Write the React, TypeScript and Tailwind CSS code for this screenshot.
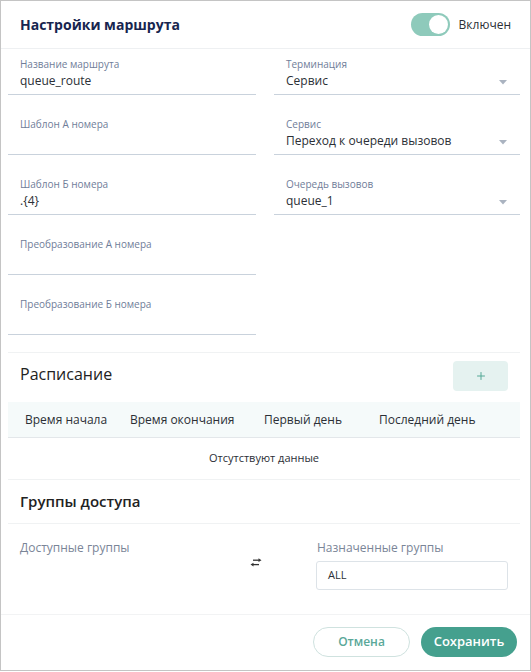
import { Plus } from "lucide-react";

const font = { fontFamily: '"Open Sans", "Noto Sans", sans-serif' };

interface FieldProps {
  label: string;
  value?: string;
  select?: boolean;
}

const Caret = () => (
  <svg width="8" height="5" viewBox="0 0 8 5" className="mr-[1px] mt-[2px]">
    <path d="M0 0 L8 0 L4 4.5 Z" fill="#aab3c0" />
  </svg>
);

const Field = ({ label, value, select }: FieldProps) => {
  return (
    <div className="h-[60px] flex flex-col justify-end border-b border-[#c9d2dc] pb-[3px]">
      <div className="px-3 text-[10px] leading-[14px] text-[#6f7d99]">{label}</div>
      <div className="px-3 h-[20px] flex items-center justify-between text-[12px] text-[#2b2f36]">
        <span>{value}</span>
        {select && <Caret />}
      </div>
    </div>
  );
};

const SwapIcon = () => (
  <svg width="12" height="9" viewBox="0 0 12 9">
    <path d="M3 2.2 H9" stroke="#333" strokeWidth="1.3" />
    <path d="M8.5 0.3 L11.5 2.2 L8.5 4.1 Z" fill="#333" />
    <path d="M9 6.6 H3" stroke="#333" strokeWidth="1.3" />
    <path d="M3.5 4.7 L0.5 6.6 L3.5 8.5 Z" fill="#333" />
  </svg>
);

export default function App() {
  return (
    <div style={font} className="w-[531px] h-[671px] border border-[#c4c4c4] bg-white flex flex-col">
      <div className="h-[48px] flex items-center justify-between pl-[19px] pr-[19px] border-b border-[#eef0f2]">
        <h1 className="text-[14px] font-bold text-[#17254f]">Настройки маршрута</h1>
        <div className="flex items-center gap-[9px]">
          <div className="w-[39px] h-[23px] rounded-full bg-[#8ecabb] flex items-center justify-end pr-[2px]">
            <div className="w-[19px] h-[19px] rounded-full bg-white" />
          </div>
          <span className="text-[12px] text-[#2b2f36]">Включен</span>
        </div>
      </div>

      <div className="pl-[7px] pr-[10px]">
        <div className="grid grid-cols-[248px_246px] gap-x-[18px] -mt-[14px]">
          <div className="flex flex-col">
            <Field label="Название маршрута" value="queue_route" />
            <Field label="Шаблон А номера" />
            <Field label="Шаблон Б номера" value=".{4}" />
            <Field label="Преобразование А номера" />
            <Field label="Преобразование Б номера" />
          </div>
          <div className="flex flex-col">
            <Field label="Терминация" value="Сервис" select />
            <Field label="Сервис" value="Переход к очереди вызовов" select />
            <Field label="Очередь вызовов" value="queue_1" select />
          </div>
        </div>

        <div className="mt-[17px] border-t border-[#f0f2f3]" />

        <div className="h-[49px] flex items-start justify-between pl-[12px] pr-[12px]">
          <h2 className="mt-[10px] leading-[22px] text-[16px] font-medium text-[#222]">Расписание</h2>
          <button className="mt-[8px] w-[55px] h-[30px] rounded-[4px] bg-[#e5f2f0] flex items-center justify-center">
            <Plus size={12} strokeWidth={2} color="#55a896" />
          </button>
        </div>

        <div className="grid grid-cols-[105px_134px_115px_1fr] h-[36px] items-center bg-[#f5fafa] border-b border-[#e3e7ea] text-[12px] text-[#2b2f36]">
          <div className="pl-[17px]">Время начала</div>
          <div className="pl-[17px]">Время окончания</div>
          <div className="pl-[17px]">Первый день</div>
          <div className="pl-[17px]">Последний день</div>
        </div>
        <div className="h-[42px] flex items-center justify-center text-[11px] text-[#2b2f36] border-b border-[#f0f2f3]">
          Отсутствуют данные
        </div>

        <div className="h-[44px] flex items-center pl-[12px] border-b border-[#f0f2f3]">
          <h2 className="text-[15px] font-semibold text-[#222]">Группы доступа</h2>
        </div>

        <div className="grid grid-cols-[230px_78px_1fr] pt-[16px] h-[90px]">
          <div className="pl-[12px] text-[12px] leading-[16px] text-[#7a8597]">Доступные группы</div>
          <div className="pt-[18px] pl-[12px]">
            <SwapIcon />
          </div>
          <div className="flex flex-col gap-[5px] pr-[12px]">
            <div className="text-[12px] leading-[16px] text-[#7a8597] pl-[1px]">Назначенные группы</div>
            <div className="h-[29px] border border-[#dde3e8] rounded-[3px] flex items-center pl-[11px] text-[11px] text-[#2b2f36]">
              ALL
            </div>
          </div>
        </div>
      </div>

      <div className="border-t border-[#f2f3f4] flex justify-end gap-[11px] pt-[12px] pr-[13px]">
        <button className="w-[97px] h-[30px] rounded-full border border-[#cfe2df] text-[12px] font-semibold text-[#5aa899]">
          Отмена
        </button>
        <button className="w-[96px] h-[30px] rounded-full bg-[#45a08e] text-[13px] font-semibold text-white">
          Сохранить
        </button>
      </div>
    </div>
  );
}
